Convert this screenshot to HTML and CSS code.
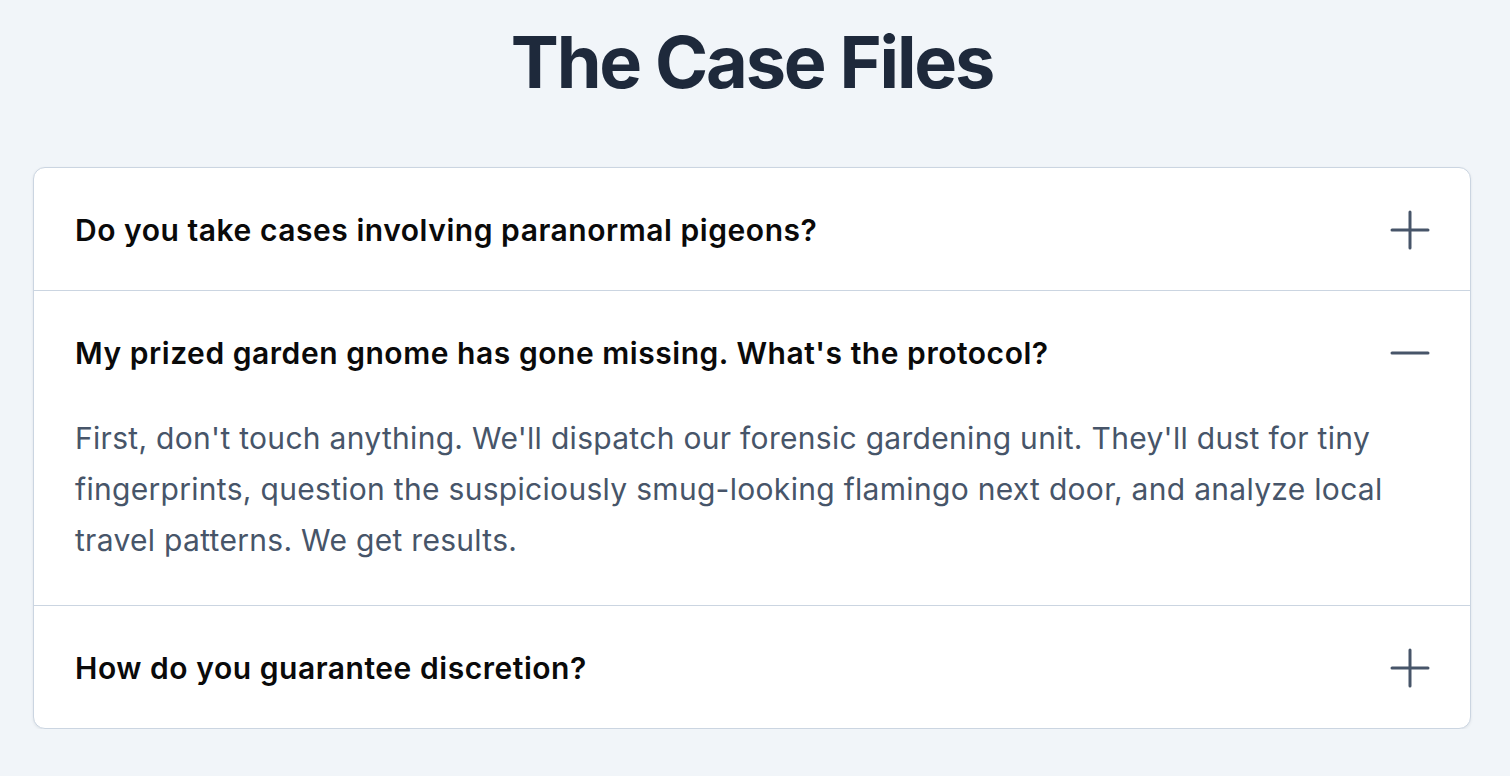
FILE: index.html
```html
<!DOCTYPE html>
<html lang="en">
<head>
<meta charset="utf-8">
<title>The Case Files</title>
<link rel="stylesheet" href="styles.css">
</head>
<body>
<main class="page">
  <h1 class="title">The Case Files</h1>
  <section class="faq">
    <div class="item">
      <div class="question">
        <span class="q-text">Do you take cases involving paranormal pigeons?</span>
        <svg class="icon" viewBox="0 0 40 40" width="40" height="40" aria-hidden="true"><path d="M20 2V38M2 20H38" /></svg>
      </div>
    </div>
    <div class="item open">
      <div class="question">
        <span class="q-text">My prized garden gnome has gone missing. What's the protocol?</span>
        <svg class="icon" viewBox="0 0 40 40" width="40" height="40" aria-hidden="true"><path d="M2 20H38" /></svg>
      </div>
      <p class="answer">First, don't touch anything. We'll dispatch our forensic gardening unit. They'll dust for tiny fingerprints, question the suspiciously smug-looking flamingo next door, and analyze local travel patterns. We get results.</p>
    </div>
    <div class="item">
      <div class="question">
        <span class="q-text">How do you guarantee discretion?</span>
        <svg class="icon" viewBox="0 0 40 40" width="40" height="40" aria-hidden="true"><path d="M20 2V38M2 20H38" /></svg>
      </div>
    </div>
  </section>
</main>
</body>
</html>
```
FILE: styles.css
```css
* { box-sizing: border-box; }
html, body { margin: 0; padding: 0; }
body {
  background: #f1f5f9;
  font-family: Inter, "Noto Sans", "Liberation Sans", sans-serif;
  padding: 26px 39px 0 33px;
}
.page {
  width: 1438px;
}
.title {
  margin: 0 0 69px;
  font-size: 72px;
  line-height: 72px;
  font-weight: 700;
  color: #1e293b;
  text-align: center;
  letter-spacing: -0.03em;
}
.faq {
  background: #ffffff;
  border: 1px solid #cbd5e1;
  border-radius: 12px;
  box-shadow: 0 1px 3px rgba(15, 23, 42, 0.08);
  overflow: hidden;
}
.item + .item {
  border-top: 1px solid #cbd5e1;
}
.question {
  display: flex;
  align-items: center;
  justify-content: space-between;
  padding: 41px 40px 39px 41px;
  min-height: 122px;
}
.q-text {
  font-size: 30px;
  line-height: 42px;
  font-weight: 600;
  color: #0a0a0a;
  letter-spacing: 0.018em;
}
.icon {
  flex: none;
  stroke: #475569;
  stroke-width: 3;
  stroke-linecap: round;
  fill: none;
}
.answer {
  margin: 0;
  padding: 0 40px 39px 41px;
  font-size: 30px;
  line-height: 51px;
  color: #475569;
  letter-spacing: 0.01em;
}
```
